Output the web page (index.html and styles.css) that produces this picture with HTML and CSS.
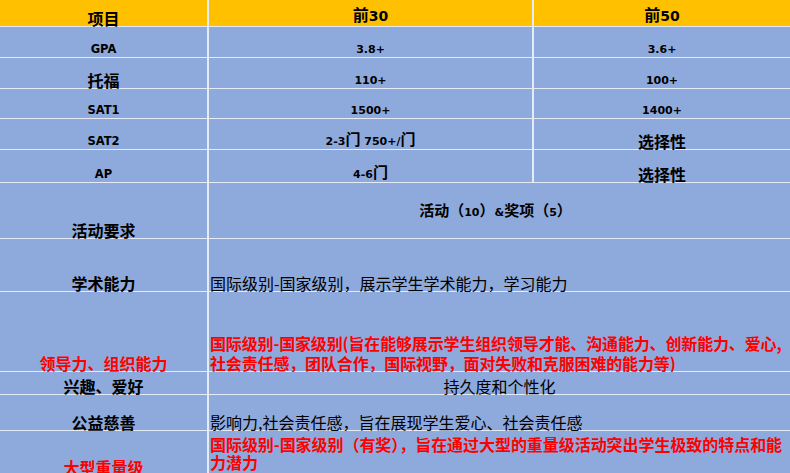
FILE: index.html
```html
<!DOCTYPE html>
<html lang="zh-CN">
<head>
<meta charset="utf-8">
<title>项目</title>
<link rel="stylesheet" href="styles.css">
</head>
<body>
<div class="sheet">
  <div class="c h"><span class="lab">项目</span></div>
  <div class="c h"><span><span class="lab">前</span><span class="hnum">30</span></span></div>
  <div class="c h"><span><span class="lab">前</span><span class="hnum">50</span></span></div>

  <div class="c"><span class="lat word">GPA</span></div>
  <div class="c"><span class="lat">3.8+</span></div>
  <div class="c"><span class="lat">3.6+</span></div>

  <div class="c"><span class="lab">托福</span></div>
  <div class="c"><span class="lat">110+</span></div>
  <div class="c"><span class="lat">100+</span></div>

  <div class="c"><span class="lat word">SAT1</span></div>
  <div class="c"><span class="lat">1500+</span></div>
  <div class="c"><span class="lat">1400+</span></div>

  <div class="c"><span class="lat word">SAT2</span></div>
  <div class="c"><span class="lat">2-3<span class="cj">门</span> 750+/<span class="cj">门</span></span></div>
  <div class="c"><span class="lab">选择性</span></div>

  <div class="c"><span class="lat word">AP</span></div>
  <div class="c"><span class="lat">4-6<span class="cj">门</span></span></div>
  <div class="c"><span class="lab">选择性</span></div>

  <div class="c"><span class="lab">活动要求</span></div>
  <div class="c span mid"><span class="act">活动（<span class="lat">10</span>）<span class="lat">&amp;</span>奖项（<span class="lat">5</span>）</span></div>

  <div class="c"><span class="lab">学术能力</span></div>
  <div class="c span l"><span class="txt">国际级别-国家级别，展示学生学术能力，学习能力</span></div>

  <div class="c"><span class="lab red">领导力、组织能力</span></div>
  <div class="c span l">
    <div class="txt red lead">
      <div class="line">国际级别-国家级别(旨在能够展示学生组织领导才能、沟通能力、创新能力、爱心,</div>
      <div class="line">社会责任感，团队合作，国际视野，面对失败和克服困难的能力等)</div>
    </div>
  </div>

  <div class="c"><span class="lab">兴趣、爱好</span></div>
  <div class="c span"><span class="txt">持久度和个性化</span></div>

  <div class="c"><span class="lab">公益慈善</span></div>
  <div class="c span l"><span class="txt">影响力,社会责任感，旨在展现学生爱心、社会责任感</span></div>

  <div class="c top big"><span class="lab red">大型重量级</span></div>
  <div class="c span l top">
    <div class="txt red last">
      <div class="line">国际级别-国家级别（有奖），旨在通过大型的重量级活动突出学生极致的特点和能</div>
      <div class="line">力潜力</div>
    </div>
  </div>
</div>
</body>
</html>
```

FILE: styles.css
```css
html, body {
  margin: 0;
  padding: 0;
  background: #e4eaf6;
  overflow: hidden;
}

body {
  width: 790px;
  height: 473px;
  font-family: "Noto Sans CJK SC", "DejaVu Sans", sans-serif;
  color: #000;
}

.sheet {
  display: grid;
  grid-template-columns: 207px 323px 1fr;
  grid-template-rows: 26px 30px 30px 29px 30px 32px 55px 52px 79px 22px 35px 50px;
  column-gap: 2px;
  row-gap: 1px;
  width: 790px;
  background: #e4eaf6;
}

.c {
  background: #8eaadc;
  display: flex;
  align-items: flex-end;
  justify-content: center;
  white-space: nowrap;
}

.h {
  background: #ffc000;
}

.span {
  grid-column: span 2;
}

.l {
  justify-content: flex-start;
  padding-left: 1px;
}

.mid {
  align-items: center;
  padding-right: 8px;
}

.top {
  align-items: flex-start;
  padding-top: 5px;
}

.big {
  padding-top: 28px;
}

.lab {
  font-family: "Noto Sans CJK SC", sans-serif;
  font-weight: 700;
  font-size: 16px;
  line-height: 16px;
}

.hnum {
  font-family: "DejaVu Sans", sans-serif;
  font-weight: 700;
  font-size: 14px;
  line-height: 16px;
}

.lat {
  font-family: "DejaVu Sans", "Noto Sans CJK SC", sans-serif;
  font-weight: 700;
  font-size: 11px;
  line-height: 13px;
  padding-bottom: 1px;
}

.word {
  font-size: 11.5px;
}

.act .lat {
  padding-bottom: 0;
}

.cj {
  font-family: "Noto Sans CJK SC", sans-serif;
  font-size: 15px;
  font-weight: 700;
}

.act {
  font-family: "Noto Sans CJK SC", sans-serif;
  font-weight: 700;
  font-size: 15px;
  line-height: 16px;
}

.txt {
  font-family: "Noto Sans CJK SC", sans-serif;
  font-size: 16px;
  line-height: 16px;
  font-weight: 400;
}

.red {
  color: #ff0000;
  font-weight: 700;
}

.lead {
  display: flex;
  flex-direction: column;
  gap: 4px;
  letter-spacing: -0.15px;
}

.last {
  display: flex;
  flex-direction: column;
  gap: 2px;
  letter-spacing: -0.05px;
}

.line {
  line-height: 16px;
}
```
